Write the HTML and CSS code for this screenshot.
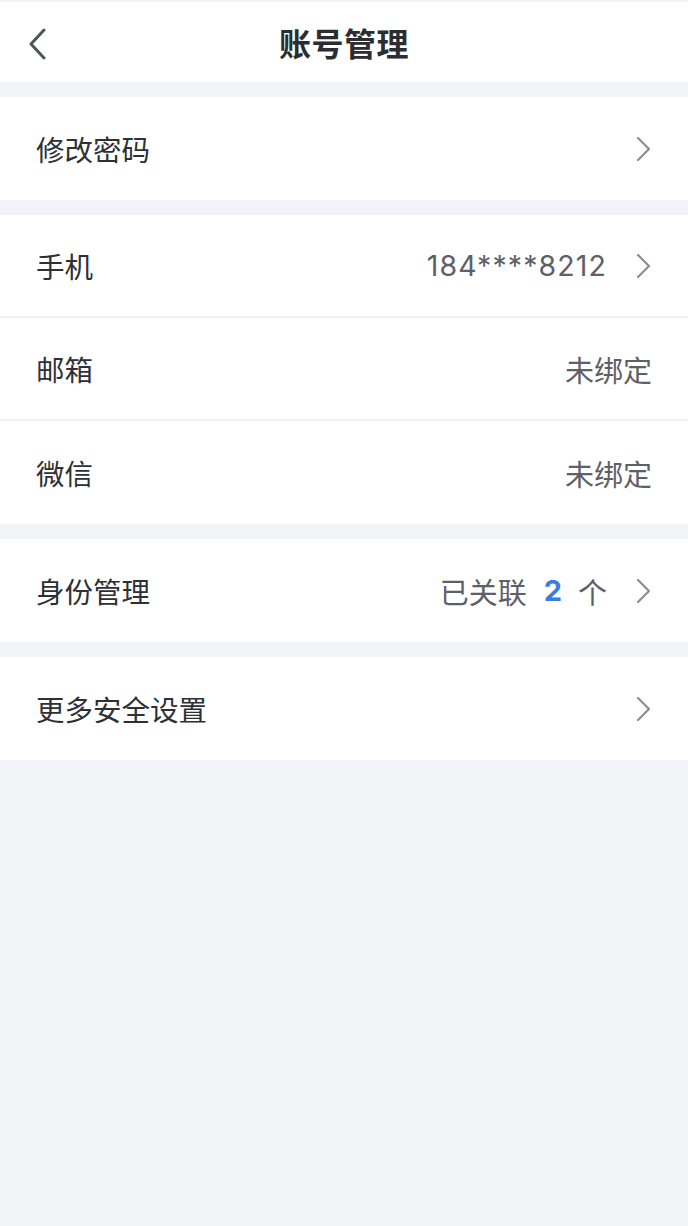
FILE: index.html
```html
<!DOCTYPE html>
<html lang="zh-CN">
<head>
<meta charset="utf-8">
<title>账号管理</title>
<link rel="stylesheet" href="styles.css">
</head>
<body>
<div class="page">
  <header class="nav">
    <span class="back">
      <svg width="20" height="32" viewBox="0 0 20 32"><path d="M17 2 L4 16 L17 30" fill="none" stroke="#50535a" stroke-width="3" stroke-linecap="round" stroke-linejoin="round"/></svg>
    </span>
    <h1 class="title">账号管理</h1>
  </header>

  <section class="group">
    <div class="row">
      <span class="label">修改密码</span>
      <span class="right"><svg class="chev" width="16" height="26" viewBox="0 0 16 26"><path d="M3 2 L14 13 L3 24" fill="none" stroke="#8c8e94" stroke-width="2.2" stroke-linecap="round" stroke-linejoin="round"/></svg></span>
    </div>
  </section>

  <section class="group">
    <div class="row">
      <span class="label">手机</span>
      <span class="right"><span class="value num">184****8212</span><svg class="chev" width="16" height="26" viewBox="0 0 16 26"><path d="M3 2 L14 13 L3 24" fill="none" stroke="#8c8e94" stroke-width="2.2" stroke-linecap="round" stroke-linejoin="round"/></svg></span>
    </div>
    <div class="row">
      <span class="label">邮箱</span>
      <span class="right"><span class="value">未绑定</span></span>
    </div>
    <div class="row">
      <span class="label">微信</span>
      <span class="right"><span class="value">未绑定</span></span>
    </div>
  </section>

  <section class="group">
    <div class="row">
      <span class="label">身份管理</span>
      <span class="right"><span class="value">已关联<b class="count">2</b>个</span><svg class="chev" width="16" height="26" viewBox="0 0 16 26"><path d="M3 2 L14 13 L3 24" fill="none" stroke="#8c8e94" stroke-width="2.2" stroke-linecap="round" stroke-linejoin="round"/></svg></span>
    </div>
  </section>

  <section class="group">
    <div class="row">
      <span class="label">更多安全设置</span>
      <span class="right"><svg class="chev" width="16" height="26" viewBox="0 0 16 26"><path d="M3 2 L14 13 L3 24" fill="none" stroke="#8c8e94" stroke-width="2.2" stroke-linecap="round" stroke-linejoin="round"/></svg></span>
    </div>
  </section>
</div>
</body>
</html>
```

FILE: styles.css
```css
html, body {
  margin: 0;
  padding: 0;
  background: #f2f3f7;
}
body {
  font-family: "Noto Sans CJK SC", "Noto Sans", sans-serif;
  color: #2e3035;
}
.page {
  padding-top: 2px;
  display: flex;
  flex-direction: column;
  gap: 15px;
}
.nav {
  height: 80px;
  background: #fff;
  display: flex;
  align-items: center;
  justify-content: center;
  position: relative;
}
.back {
  position: absolute;
  left: 27px;
  top: 26px;
  display: flex;
}
.title {
  margin: 0;
  font-size: 32px;
  font-weight: 700;
  color: #2b2d32;
  letter-spacing: 0.5px;
}
.group {
  background: #fff;
  display: flex;
  flex-direction: column;
}
.row {
  box-sizing: border-box;
  height: 103px;
  display: flex;
  align-items: center;
  justify-content: space-between;
  padding: 0 36px;
  border-bottom: 2px solid #f0f1f4;
}
.row:last-child {
  border-bottom: none;
}
.label {
  font-size: 28.5px;
  color: #2e3035;
}
.right {
  display: flex;
  align-items: center;
  gap: 28px;
}
.value {
  font-size: 29px;
  color: #5d6068;
  display: flex;
  align-items: center;
}
.num {
  font-family: "Inter", "Noto Sans", sans-serif;
  font-size: 28.5px;
  letter-spacing: 1.1px;
}
.count {
  color: #3c7be0;
  font-weight: 700;
  font-family: "Inter", "Noto Sans", sans-serif;
  margin: 0 16px 0 17px;
}
.chev {
  display: block;
  margin-right: 1px;
}
```
